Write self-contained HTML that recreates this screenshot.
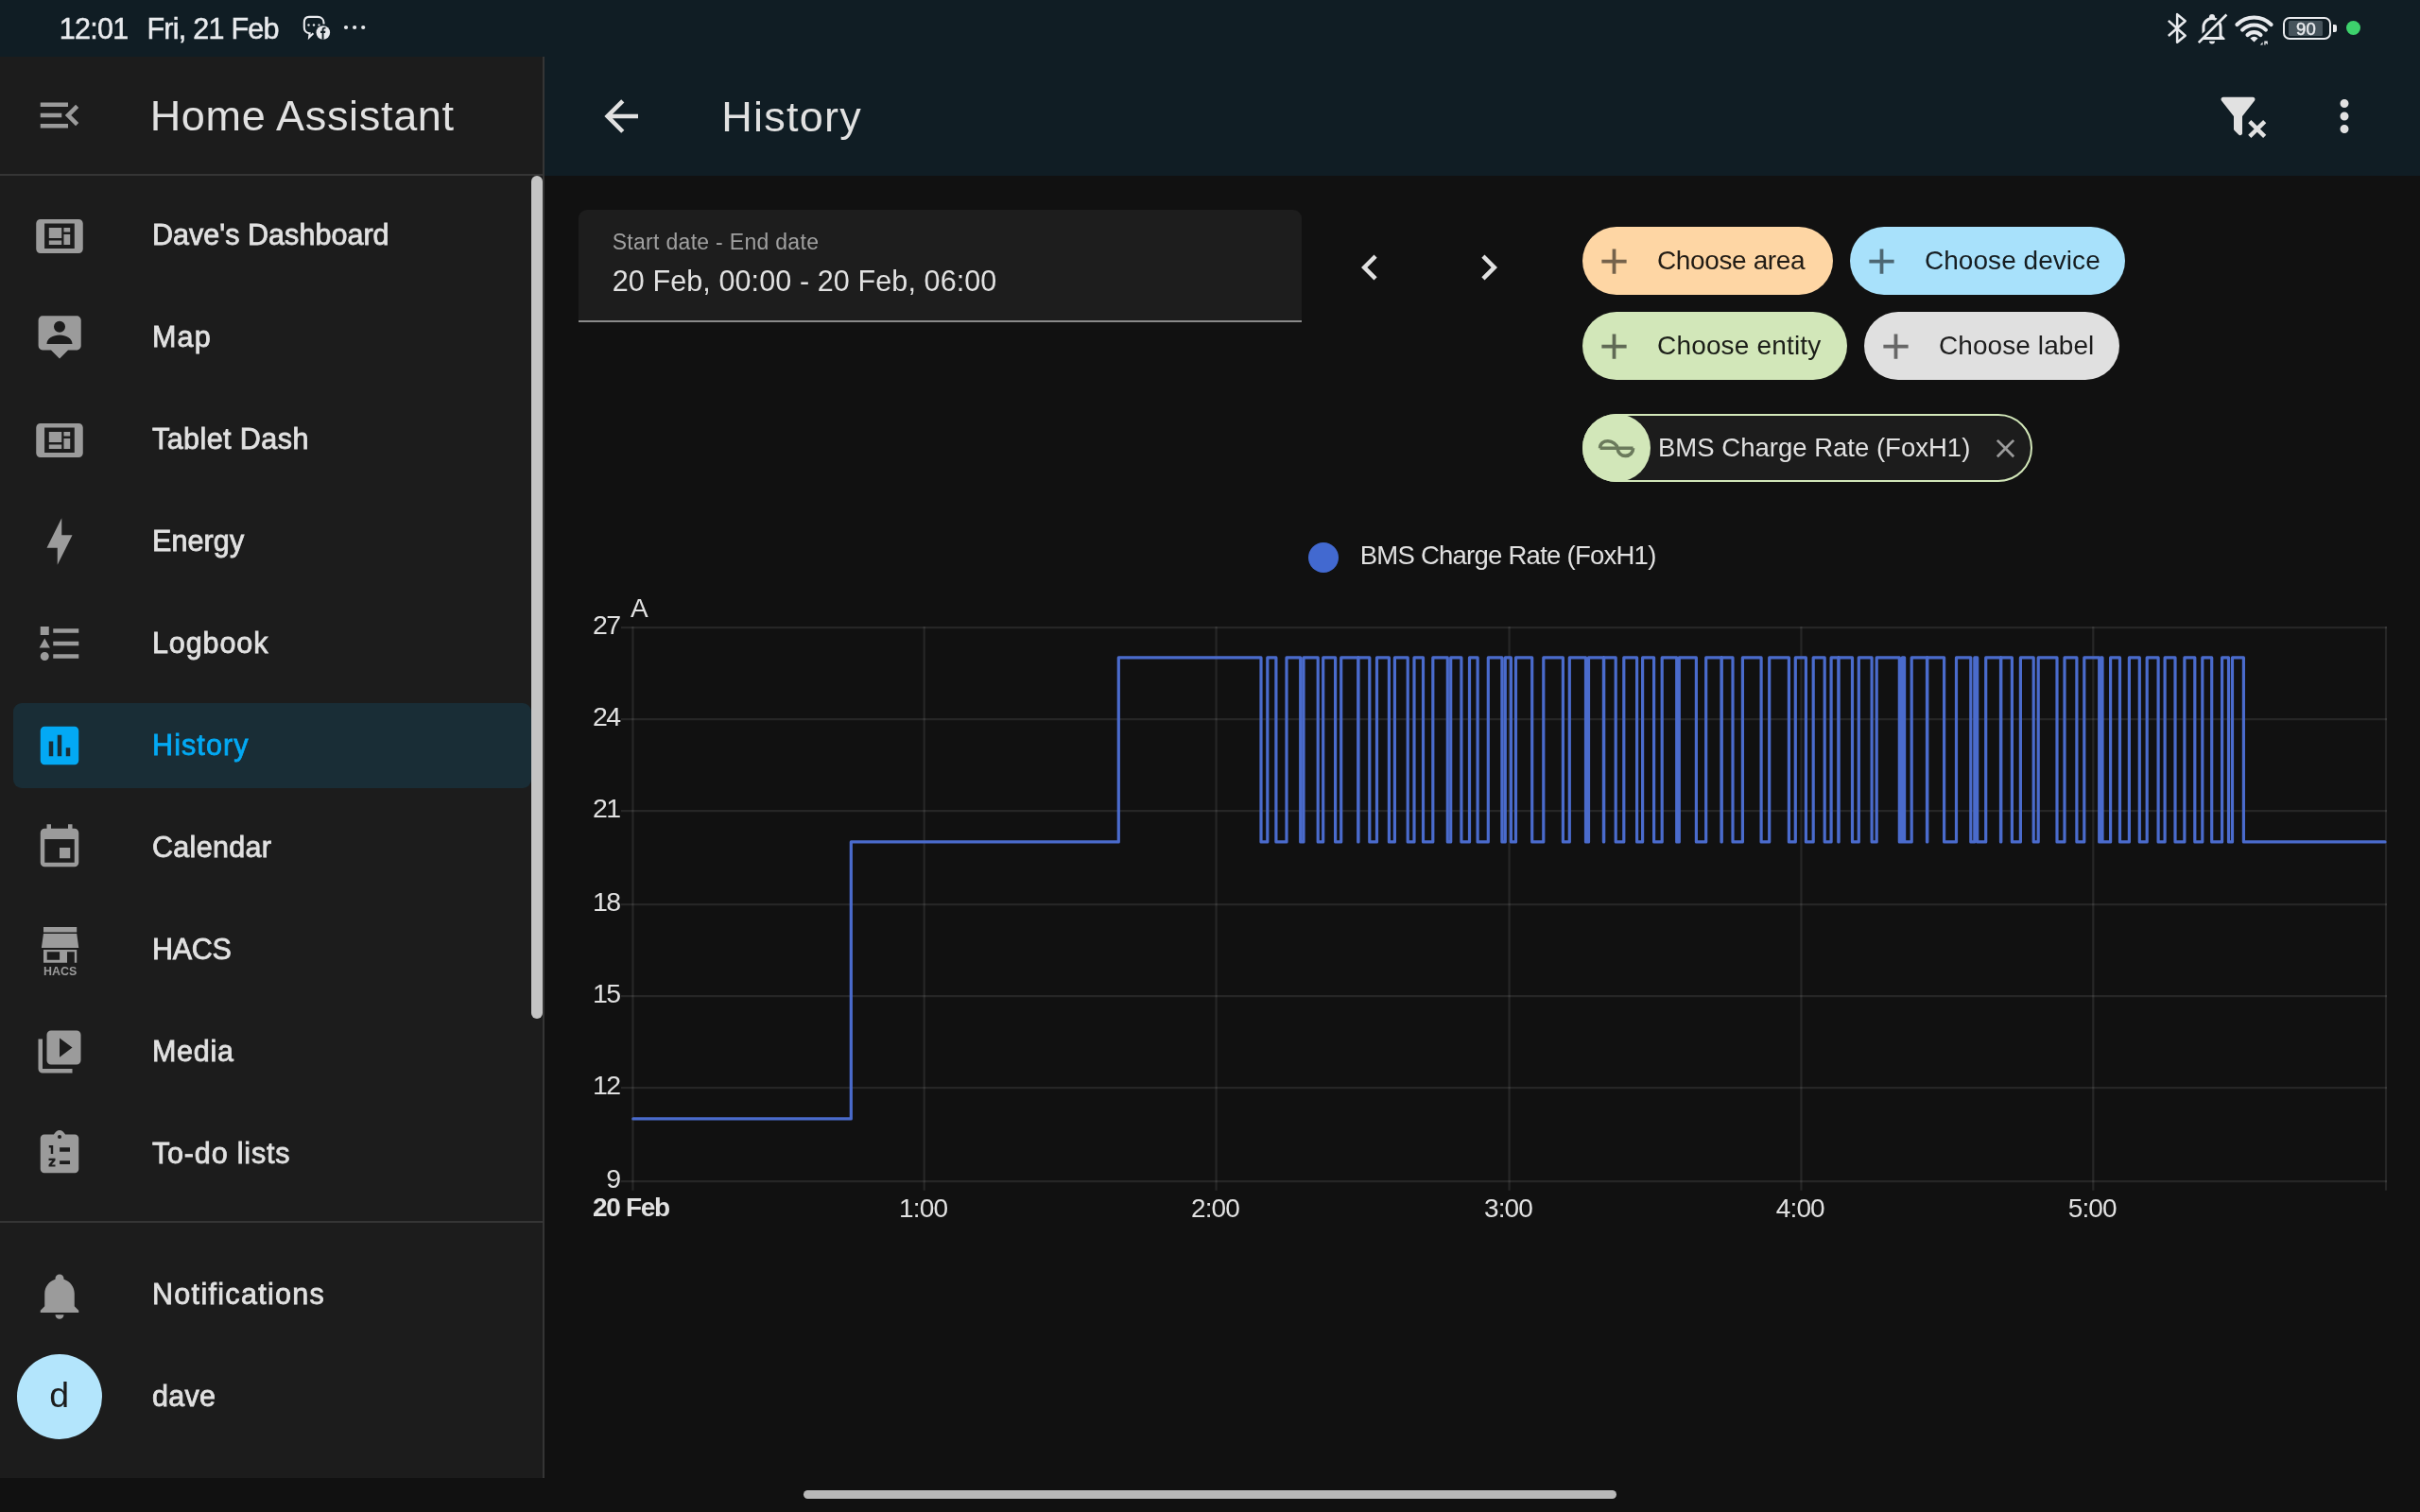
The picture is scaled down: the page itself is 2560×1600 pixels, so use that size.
<!DOCTYPE html><html><head><meta charset="utf-8"><style>
html,body{margin:0;padding:0;}
body{width:2560px;height:1600px;position:relative;overflow:hidden;will-change:transform;background:#111111;font-family:"Liberation Sans",sans-serif;}
.t{position:absolute;white-space:nowrap;}
.i{position:absolute;display:block;}
.r{position:absolute;}
</style></head><body>
<div class="r" style="left:0;top:0;width:2560px;height:60px;background:#101d24"></div>
<div class="r" style="left:576px;top:60px;width:1984px;height:126px;background:#101d24"></div>
<div class="r" style="left:0;top:60px;width:574px;height:1504px;background:#1c1c1c"></div>
<div class="r" style="left:574px;top:60px;width:2px;height:1504px;background:#353535"></div>
<div class="r" style="left:0;top:184px;width:574px;height:2px;background:#353535"></div>
<div class="r" style="left:0;top:1291.5px;width:574px;height:2px;background:#353535"></div>
<div class="r" style="left:562px;top:186px;width:12px;height:892px;border-radius:6px;background:#c4c4c4"></div>
<div class="t" style="left:62.8px;top:14.5px;font-size:30.5px;line-height:30.5px;color:#e8eaed;font-weight:400;letter-spacing:-0.7px;-webkit-text-stroke:0.5px currentColor;">12:01</div>
<div class="t" style="left:155.4px;top:14.5px;font-size:30.5px;line-height:30.5px;color:#e8eaed;font-weight:400;letter-spacing:-0.74px;-webkit-text-stroke:0.5px currentColor;">Fri, 21 Feb</div>
<svg class="i" style="left:310px;top:10px;width:90px;height:40px" viewBox="0 0 90 40"><path fill="none" stroke="#e8eaed" stroke-width="2.1" d="M32.5 15.5V14C32.5 10 29.5 7.9 26 7.9H17C13.5 7.9 11.8 10.5 11.8 14V19C11.8 22.5 14 25.2 17.5 25.2H17.6L17.1 29.4L21.4 25.3"/><circle cx="16.5" cy="16.5" r="1.2" fill="#e8eaed"/><circle cx="22" cy="16.5" r="1.2" fill="#e8eaed"/><path d="M26.5 16.5H28.5" stroke="#e8eaed" stroke-width="2"/><circle cx="31.8" cy="24.5" r="7.3" fill="#e8eaed"/><path fill="#111d23" d="M30.6 31.8V24.9H29V22.8H30.6V21.3C30.6 19.6 31.6 18.7 33.1 18.7C33.8 18.7 34.3 18.8 34.5 18.8V20.6H33.5C32.7 20.6 32.5 21 32.5 21.6V22.8H34.4L34.1 24.9H32.5V31.8Z"/><circle cx="56" cy="19" r="2.1" fill="#e8eaed"/><circle cx="65.1" cy="19" r="2.1" fill="#e8eaed"/><circle cx="74.2" cy="19" r="2.1" fill="#e8eaed"/></svg>
<svg class="i" style="left:2285px;top:10.7px;width:37.9px;height:37.9px" viewBox="0 0 24 24"><path fill="none" stroke="#e8eaed" stroke-width="1.6" stroke-linejoin="round" d="M5.6 6.9L16.9 16.9L11.5 21.4V2.6L16.9 7.1L5.6 17.1"/></svg>
<svg class="i" style="left:2322px;top:12px;width:36px;height:36px" viewBox="0 0 24 24"><g transform="translate(24,0) scale(-1,1)"><path fill="#e8eaed" d="M22.11 21.46L2.39 1.73L1.11 3L5.83 7.72C5.29 8.73 5 9.86 5 11V17L3 19V20H18.11L20.84 22.73L22.11 21.46M7 18V11C7 10.39 7.11 9.79 7.34 9.23L16.11 18H7M10 21H14A2 2 0 0 1 12 23A2 2 0 0 1 10 21M8.29 5.09C8.82 4.75 9.4 4.5 10 4.29V4A2 2 0 0 1 12 2A2 2 0 0 1 14 4V4.29C16.97 5.17 19 7.9 19 11V15.8L17 13.8V11A5 5 0 0 0 12 6C11.22 6 10.45 6.2 9.76 6.56L8.29 5.09Z"/></g></svg>
<svg class="i" style="left:2360px;top:10px;width:50px;height:40px" viewBox="0 0 50 40"><g fill="none" stroke="#e8eaed" stroke-width="4.2" stroke-linecap="round"><path d="M6.47 15.97A25.5 25.5 0 0 1 42.53 15.97"/><path d="M12.13 21.63A17.5 17.5 0 0 1 36.87 21.63"/><path d="M17.57 27.07A9.8 9.8 0 0 1 31.43 27.07"/></g><path fill="#e8eaed" d="M24.5 34.5L20.4 30.4A5.8 5.8 0 0 1 28.6 30.4Z"/><path fill="#e8eaed" d="M30.8 37.5L33.6 34.4V37.5Z M35.3 33.6V37.5H36.6V35.3L38.8 37.3V33.6Z"/></svg>
<div class="r" style="left:2415.3px;top:17.6px;width:50.6px;height:24.7px;box-sizing:border-box;border:2.6px solid #e8eaed;border-radius:7px"></div>
<div class="r" style="left:2421px;top:21.8px;width:36px;height:16.2px;background:#46535b;border-radius:1.5px"></div>
<div class="r" style="left:2467.6px;top:25.8px;width:4px;height:8.3px;background:#e8eaed;border-radius:0 2px 2px 0"></div>
<div class="t" style="left:2429px;top:21.5px;font-size:18.5px;line-height:18.5px;color:#e8eaed;font-weight:400;-webkit-text-stroke:0.5px currentColor;letter-spacing:0.3px;">90</div>
<div class="r" style="left:2481.8px;top:21.8px;width:15.2px;height:15.2px;border-radius:50%;background:#3dd16c"></div>
<svg class="i" style="left:36px;top:94.5px;width:54px;height:54px;" viewBox="0 0 24 24"><path fill="#9b9b9b" fill-rule="evenodd" d="M21,15.61L19.59,17L14.58,12L19.59,7L21,8.39L17.44,12L21,15.61M3,6H16V8H3V6M3,13V11H13V13H3M3,18V16H16V18H3Z"/></svg>
<div class="t" style="left:158.7px;top:100.1px;font-size:45px;line-height:45px;color:#e1e1e1;font-weight:400;letter-spacing:0.67px;">Home Assistant</div>
<svg class="i" style="left:36px;top:222px;width:54px;height:54px;" viewBox="0 0 24 24"><path fill="#9b9b9b" fill-rule="evenodd" d="M3 4.4H21C22.1 4.4 23 5.3 23 6.4V18.44C23 19.54 22.1 20.44 21 20.44H3C1.9 20.44 1 19.54 1 18.44V6.4C1 5.3 1.9 4.4 3 4.4Z M4.93 6.44V18.27H19.02V6.44Z M7.02 8.4H12.98V13.33H7.02Z M13.98 8.4H16.98V10.49H13.98Z M7.02 14.4H12.98V16.44H7.02Z M13.98 11.51H16.98V16.44H13.98Z"/></svg>
<div class="t" style="left:161px;top:233.2px;font-size:30.5px;line-height:30.5px;color:#e1e1e1;font-weight:400;-webkit-text-stroke:0.8px currentColor;letter-spacing:0.04px;">Dave's Dashboard</div>
<svg class="i" style="left:36px;top:330px;width:54px;height:54px;" viewBox="0 0 24 24"><path fill="#9b9b9b" fill-rule="evenodd" d="M4 1.9H20C21.15 1.9 22.1 2.85 22.1 4V15.85C22.1 17 21.15 17.95 20 17.95H16L12 21.96L8 17.95H4C2.85 17.95 2.04 17 2.04 15.85V4C2.04 2.85 2.85 1.9 4 1.9Z M6 15.07C6 12.5 9 10.93 12 10.93C15 10.93 18 12.5 18 15.07Z M12 4.31A2.67 2.67 0 1 0 12 9.65A2.67 2.67 0 1 0 12 4.31Z"/></svg>
<div class="t" style="left:161px;top:341.2px;font-size:30.5px;line-height:30.5px;color:#e1e1e1;font-weight:400;-webkit-text-stroke:0.8px currentColor;letter-spacing:1.2px;">Map</div>
<svg class="i" style="left:36px;top:438px;width:54px;height:54px;" viewBox="0 0 24 24"><path fill="#9b9b9b" fill-rule="evenodd" d="M3 4.4H21C22.1 4.4 23 5.3 23 6.4V18.44C23 19.54 22.1 20.44 21 20.44H3C1.9 20.44 1 19.54 1 18.44V6.4C1 5.3 1.9 4.4 3 4.4Z M4.93 6.44V18.27H19.02V6.44Z M7.02 8.4H12.98V13.33H7.02Z M13.98 8.4H16.98V10.49H13.98Z M7.02 14.4H12.98V16.44H7.02Z M13.98 11.51H16.98V16.44H13.98Z"/></svg>
<div class="t" style="left:161px;top:449.2px;font-size:30.5px;line-height:30.5px;color:#e1e1e1;font-weight:400;-webkit-text-stroke:0.8px currentColor;letter-spacing:0.43px;">Tablet Dash</div>
<svg class="i" style="left:36px;top:546px;width:54px;height:54px;" viewBox="0 0 24 24"><path fill="#9b9b9b" fill-rule="evenodd" d="M11 15H6L13 1V9H18L11 23V15Z"/></svg>
<div class="t" style="left:161px;top:557.2px;font-size:30.5px;line-height:30.5px;color:#e1e1e1;font-weight:400;-webkit-text-stroke:0.8px currentColor;letter-spacing:0.1px;">Energy</div>
<svg class="i" style="left:36px;top:654px;width:54px;height:54px;" viewBox="0 0 24 24"><path fill="#9b9b9b" fill-rule="evenodd" d="M5,9.5L7.5,14H2.5L5,9.5M3,4H7V8H3V4M5,20A2,2 0 0,0 7,18A2,2 0 0,0 5,16A2,2 0 0,0 3,18A2,2 0 0,0 5,20M9,5V7H21V5H9M9,19H21V17H9V19M9,13H21V11H9V13Z"/></svg>
<div class="t" style="left:161px;top:665.2px;font-size:30.5px;line-height:30.5px;color:#e1e1e1;font-weight:400;-webkit-text-stroke:0.8px currentColor;letter-spacing:0.9px;">Logbook</div>
<div class="r" style="left:14px;top:744px;width:548px;height:90px;border-radius:9px;background:#192d36"></div>
<svg class="i" style="left:36px;top:762px;width:54px;height:54px;" viewBox="0 0 24 24"><path fill="#03a9f4" fill-rule="evenodd" d="M19 3H5C3.9 3 3 3.9 3 5V19C3 20.1 3.9 21 5 21H19C20.1 21 21 20.1 21 19V5C21 3.9 20.1 3 19 3M9 17H7V10H9V17M13 17H11V7H13V17M17 17H15V13H17V17Z"/></svg>
<div class="t" style="left:161px;top:773.2px;font-size:30.5px;line-height:30.5px;color:#03a9f4;font-weight:400;-webkit-text-stroke:0.8px currentColor;letter-spacing:1.1px;">History</div>
<svg class="i" style="left:36px;top:870px;width:54px;height:54px;" viewBox="0 0 24 24"><path fill="#9b9b9b" fill-rule="evenodd" d="M19,19H5V8H19M16,1V3H8V1H6V3H5C3.89,3 3,3.89 3,5V19A2,2 0 0,0 5,21H19A2,2 0 0,0 21,19V5C21,3.89 20.1,3 19,3H18V1M17,12H12V17H17V12Z"/></svg>
<div class="t" style="left:161px;top:881.2px;font-size:30.5px;line-height:30.5px;color:#e1e1e1;font-weight:400;-webkit-text-stroke:0.8px currentColor;letter-spacing:0.29px;">Calendar</div>
<svg class="i" style="left:36px;top:978px;width:54px;height:54px" viewBox="0 0 24 24"><path fill="#9b9b9b" fill-rule="evenodd" d="M4.44 1.38H20.1V3.73H4.44Z M4.44 4.44H20.1L21 11.07H3.5Z M4.44 12H20.1V18.13H19.02V13H15.56V18.13H4.44Z M6.1 13.02V16.8H12.04V13.02Z"/><text x="12.27" y="23.9" font-family="Liberation Sans" font-weight="700" font-size="5.9" text-anchor="middle" textLength="15.66" lengthAdjust="spacingAndGlyphs" fill="#9b9b9b">HACS</text></svg>
<div class="t" style="left:161px;top:989.2px;font-size:30.5px;line-height:30.5px;color:#e1e1e1;font-weight:400;-webkit-text-stroke:0.8px currentColor;letter-spacing:-0.3px;">HACS</div>
<svg class="i" style="left:36px;top:1086px;width:54px;height:54px;" viewBox="0 0 24 24"><path fill="#9b9b9b" fill-rule="evenodd" d="M4,6H2V20A2,2 0 0,0 4,22H18V20H4V6M20,2H8A2,2 0 0,0 6,4V16A2,2 0 0,0 8,18H20A2,2 0 0,0 22,16V4A2,2 0 0,0 20,2M12,14.5V5.5L18,10L12,14.5Z"/></svg>
<div class="t" style="left:161px;top:1097.2px;font-size:30.5px;line-height:30.5px;color:#e1e1e1;font-weight:400;-webkit-text-stroke:0.8px currentColor;letter-spacing:0.7px;">Media</div>
<svg class="i" style="left:36px;top:1194px;width:54px;height:54px" viewBox="0 0 24 24"><path fill="#9b9b9b" fill-rule="evenodd" d="M4.8 2.9H9.3C10 1.6 10.9 0.84 12 0.84C13.1 0.84 14 1.6 14.7 2.9H19.2C20.2 2.9 21 3.7 21 4.7V19.2C21 20.2 20.2 21 19.2 21H4.8C3.8 21 3 20.2 3 19.2V4.7C3 3.7 3.8 2.9 4.8 2.9Z M12 3.1A0.9 0.9 0 1 0 12 4.9A0.9 0.9 0 1 0 12 3.1Z M12.04 8.98H16.9V11H12.04Z M12.04 15.24H16.9V16.9H12.04Z"/><path fill="#1c1c1c" d="M7.0 8H8.98V11.96H7.9V9.1H7.0Z M6.9 14.09H10V15.1L8.3 17.1H10V18H6.9V17.1L8.6 15.1H6.9Z"/></svg>
<div class="t" style="left:161px;top:1205.2px;font-size:30.5px;line-height:30.5px;color:#e1e1e1;font-weight:400;-webkit-text-stroke:0.8px currentColor;letter-spacing:0.83px;">To-do lists</div>
<svg class="i" style="left:36px;top:1343.8px;width:54px;height:54px;" viewBox="0 0 24 24"><path fill="#9b9b9b" fill-rule="evenodd" d="M21,19V20H3V19L5,17V11C5,7.9 7.03,5.17 10,4.29C10,4.19 10,4.1 10,4A2,2 0 0,1 12,2A2,2 0 0,1 14,4C14,4.1 14,4.19 14,4.29C16.97,5.17 19,7.9 19,11V17L21,19M14,21A2,2 0 0,1 12,23A2,2 0 0,1 10,21"/></svg>
<div class="t" style="left:161px;top:1354.2px;font-size:30.5px;line-height:30.5px;color:#e1e1e1;font-weight:400;-webkit-text-stroke:0.8px currentColor;letter-spacing:1.31px;">Notifications</div>
<div class="r" style="left:18px;top:1433px;width:90px;height:90px;border-radius:50%;background:#b3e5fc"></div>
<div class="t" style="left:52.3px;top:1458px;font-size:37.5px;line-height:37.5px;color:#1c1c1c;font-weight:400;">d</div>
<div class="t" style="left:161px;top:1462.2px;font-size:30.5px;line-height:30.5px;color:#e1e1e1;font-weight:400;-webkit-text-stroke:0.8px currentColor;letter-spacing:0.27px;">dave</div>
<svg class="i" style="left:630px;top:95.8px;width:54px;height:54px;" viewBox="0 0 24 24"><path fill="#e1e1e1" fill-rule="evenodd" d="M20,11V13H8L13.5,18.5L12.08,19.92L4.16,12L12.08,4.08L13.5,5.5L8,11H20Z"/></svg>
<div class="t" style="left:763.3px;top:101.3px;font-size:45px;line-height:45px;color:#e1e1e1;font-weight:400;letter-spacing:1.25px;">History</div>
<svg class="i" style="left:2345px;top:95.8px;width:54px;height:54px;" viewBox="0 0 24 24"><path fill="#e1e1e1" fill-rule="evenodd" d="M14.76,20.83L17.6,18L14.76,15.17L16.17,13.76L19,16.57L21.83,13.76L23.24,15.17L20.43,18L23.24,20.83L21.83,22.24L19,19.41L16.17,22.24L14.76,20.83M12,12V19.88C12.04,20.18 11.94,20.5 11.71,20.71C11.32,21.1 10.69,21.1 10.3,20.71L8.29,18.7C8.06,18.47 7.96,18.16 8,17.87V12H7.97L2.21,4.62C1.87,4.19 1.95,3.56 2.38,3.22C2.57,3.08 2.78,3 3,3V3H17V3C17.22,3 17.43,3.08 17.62,3.22C18.05,3.56 18.13,4.19 17.79,4.62L12.03,12H12Z"/></svg>
<svg class="i" style="left:2453px;top:96px;width:54px;height:54px;" viewBox="0 0 24 24"><path fill="#e1e1e1" fill-rule="evenodd" d="M12,16A2,2 0 0,1 14,18A2,2 0 0,1 12,20A2,2 0 0,1 10,18A2,2 0 0,1 12,16M12,10A2,2 0 0,1 14,12A2,2 0 0,1 12,14A2,2 0 0,1 10,12A2,2 0 0,1 12,10M12,4A2,2 0 0,1 14,6A2,2 0 0,1 12,8A2,2 0 0,1 10,6A2,2 0 0,1 12,4Z"/></svg>
<div class="r" style="left:612px;top:222px;width:765px;height:119px;border-radius:9px 9px 0 0;background:#1d1d1d"></div>
<div class="r" style="left:612px;top:338.5px;width:765px;height:2.5px;background:#8a8a8a"></div>
<div class="t" style="left:647.7px;top:244.5px;font-size:23px;line-height:23px;color:#a0a0a0;font-weight:400;letter-spacing:0.3px;">Start date - End date</div>
<div class="t" style="left:647.7px;top:282.2px;font-size:30.5px;line-height:30.5px;color:#e1e1e1;font-weight:400;letter-spacing:0.11px;">20 Feb, 00:00 - 20 Feb, 06:00</div>
<svg class="i" style="left:1421.6px;top:255.5px;width:54px;height:54px;" viewBox="0 0 24 24"><path fill="#e1e1e1" fill-rule="evenodd" d="M15.41,16.58L10.83,12L15.41,7.41L14,6L8,12L14,18L15.41,16.58Z"/></svg>
<svg class="i" style="left:1547.7px;top:255.5px;width:54px;height:54px;" viewBox="0 0 24 24"><path fill="#e1e1e1" fill-rule="evenodd" d="M8.59,16.58L13.17,12L8.59,7.41L10,6L16,12L10,18L8.59,16.58Z"/></svg>
<div class="r" style="left:1674px;top:240px;width:265px;height:72px;border-radius:36px;background:#fed6a4"></div>
<svg class="i" style="left:1684.6px;top:253.5px;width:45px;height:45px;" viewBox="0 0 24 24"><path fill="rgba(0,0,0,0.54)" fill-rule="evenodd" d="M19,13H13V19H11V13H5V11H11V5H13V11H19V13Z"/></svg>
<div class="t" style="left:1753px;top:261.6px;font-size:28px;line-height:28px;color:rgba(0,0,0,0.87);font-weight:400;letter-spacing:-0.38px;">Choose area</div>
<div class="r" style="left:1957px;top:240px;width:291px;height:72px;border-radius:36px;background:#a8e1fb"></div>
<svg class="i" style="left:1967.6px;top:253.5px;width:45px;height:45px;" viewBox="0 0 24 24"><path fill="rgba(0,0,0,0.54)" fill-rule="evenodd" d="M19,13H13V19H11V13H5V11H11V5H13V11H19V13Z"/></svg>
<div class="t" style="left:2036px;top:261.6px;font-size:28px;line-height:28px;color:rgba(0,0,0,0.87);font-weight:400;letter-spacing:0.04px;">Choose device</div>
<div class="r" style="left:1674px;top:330px;width:280px;height:72px;border-radius:36px;background:#d2e7b9"></div>
<svg class="i" style="left:1684.6px;top:343.5px;width:45px;height:45px;" viewBox="0 0 24 24"><path fill="rgba(0,0,0,0.54)" fill-rule="evenodd" d="M19,13H13V19H11V13H5V11H11V5H13V11H19V13Z"/></svg>
<div class="t" style="left:1753px;top:351.6px;font-size:28px;line-height:28px;color:rgba(0,0,0,0.87);font-weight:400;letter-spacing:0.17px;">Choose entity</div>
<div class="r" style="left:1972px;top:330px;width:270px;height:72px;border-radius:36px;background:#e0e0e0"></div>
<svg class="i" style="left:1982.6px;top:343.5px;width:45px;height:45px;" viewBox="0 0 24 24"><path fill="rgba(0,0,0,0.54)" fill-rule="evenodd" d="M19,13H13V19H11V13H5V11H11V5H13V11H19V13Z"/></svg>
<div class="t" style="left:2051px;top:351.6px;font-size:28px;line-height:28px;color:rgba(0,0,0,0.87);font-weight:400;letter-spacing:0.08px;">Choose label</div>
<div class="r" style="left:1674px;top:438px;width:476px;height:72px;border-radius:36px;background:#1c1c1c;box-sizing:border-box;border:2px solid #d2e7b9"></div>
<div class="r" style="left:1674px;top:438px;width:72px;height:72px;border-radius:50%;background:#d2e7b9"></div>
<svg class="i" style="left:1674px;top:438px;width:72px;height:72px" viewBox="0 0 72 72"><path fill="none" stroke="#6b7a5c" stroke-width="3.6" d="M18.6 36.2 H53.6 M18.6 36.2 C18.6 31.5 22.3 28.8 26.9 28.8 C31.8 28.8 36.6 32.5 37 36.2 C37.6 41.5 41.5 44.4 45.5 44.4 C50 44.4 53.6 41 53.6 36.2"/></svg>
<div class="t" style="left:1754px;top:459.7px;font-size:27.5px;line-height:27.5px;color:#e1e1e1;font-weight:400;letter-spacing:0.01px;">BMS Charge Rate (FoxH1)</div>
<svg class="i" style="left:2104.5px;top:457.5px;width:33px;height:33px;" viewBox="0 0 24 24"><path fill="#9b9b9b" fill-rule="evenodd" d="M19,6.41L17.59,5L12,10.59L6.41,5L5,6.41L10.59,12L5,17.59L6.41,19L12,13.41L17.59,19L19,17.59L13.41,12L19,6.41Z"/></svg>
<div class="r" style="left:1384px;top:573.7px;width:32px;height:32px;border-radius:50%;background:#4269d0"></div>
<div class="t" style="left:1438.7px;top:574.4px;font-size:27.5px;line-height:27.5px;color:#e1e1e1;font-weight:400;letter-spacing:-0.75px;">BMS Charge Rate (FoxH1)</div>
<svg class="i" style="left:0;top:0;width:2560px;height:1600px" viewBox="0 0 2560 1600"><line x1="657" y1="664.1" x2="2525" y2="664.1" stroke="rgba(255,255,255,0.09)" stroke-width="2.25"/><line x1="657" y1="761" x2="2525" y2="761" stroke="rgba(255,255,255,0.09)" stroke-width="2.25"/><line x1="657" y1="858" x2="2525" y2="858" stroke="rgba(255,255,255,0.09)" stroke-width="2.25"/><line x1="657" y1="957.1" x2="2525" y2="957.1" stroke="rgba(255,255,255,0.09)" stroke-width="2.25"/><line x1="657" y1="1054" x2="2525" y2="1054" stroke="rgba(255,255,255,0.09)" stroke-width="2.25"/><line x1="657" y1="1151" x2="2525" y2="1151" stroke="rgba(255,255,255,0.09)" stroke-width="2.25"/><line x1="657" y1="1250" x2="2525" y2="1250" stroke="rgba(255,255,255,0.09)" stroke-width="2.25"/><line x1="669.4" y1="663" x2="669.4" y2="1259.7" stroke="rgba(255,255,255,0.09)" stroke-width="2.25"/><line x1="977.7" y1="663" x2="977.7" y2="1259.7" stroke="rgba(255,255,255,0.09)" stroke-width="2.25"/><line x1="1286.6" y1="663" x2="1286.6" y2="1259.7" stroke="rgba(255,255,255,0.09)" stroke-width="2.25"/><line x1="1596.6" y1="663" x2="1596.6" y2="1259.7" stroke="rgba(255,255,255,0.09)" stroke-width="2.25"/><line x1="1905.4" y1="663" x2="1905.4" y2="1259.7" stroke="rgba(255,255,255,0.09)" stroke-width="2.25"/><line x1="2214.3" y1="663" x2="2214.3" y2="1259.7" stroke="rgba(255,255,255,0.09)" stroke-width="2.25"/><line x1="2524" y1="663" x2="2524" y2="1259.7" stroke="rgba(255,255,255,0.09)" stroke-width="2.25"/><path d="M669.8 1183.9 L900.3 1183.9 L900.3 890.9 L1183.3 890.9 L1183.3 695.9 L1334 695.9 L1334 890.9 L1340.8 890.9 L1340.8 695.9 L1349.9 695.9 L1349.9 890.9 L1361 890.9 L1361 695.9 L1375.7 695.9 L1375.7 890.9 L1379 890.9 L1379 695.9 L1394.2 695.9 L1394.2 890.9 L1399.7 890.9 L1399.7 695.9 L1412.6 695.9 L1412.6 890.9 L1418.7 890.9 L1418.7 695.9 L1436.7 695.9 L1436.7 890.9 L1437 890.9 L1437 695.9 L1448.8 695.9 L1448.8 890.9 L1456.5 890.9 L1456.5 695.9 L1469.4 695.9 L1469.4 890.9 L1475.4 890.9 L1475.4 695.9 L1489.2 695.9 L1489.2 890.9 L1496 890.9 L1496 695.9 L1505.5 695.9 L1505.5 890.9 L1515.8 890.9 L1515.8 695.9 L1531.3 695.9 L1531.3 890.9 L1534.7 890.9 L1534.7 695.9 L1545.9 695.9 L1545.9 890.9 L1554.5 890.9 L1554.5 695.9 L1563.1 695.9 L1563.1 890.9 L1574.3 890.9 L1574.3 695.9 L1588.9 695.9 L1588.9 890.9 L1592.3 890.9 L1592.3 695.9 L1598.4 695.9 L1598.4 890.9 L1603.5 890.9 L1603.5 695.9 L1620.7 695.9 L1620.7 890.9 L1632.8 890.9 L1632.8 695.9 L1653.4 695.9 L1653.4 890.9 L1660.3 890.9 L1660.3 695.9 L1677.5 695.9 L1677.5 890.9 L1680.5 890.9 L1680.5 695.9 L1696.4 695.9 L1696.4 890.9 L1696.7 890.9 L1696.7 695.9 L1709.2 695.9 L1709.2 890.9 L1717.8 890.9 L1717.8 695.9 L1731.6 695.9 L1731.6 890.9 L1737.6 890.9 L1737.6 695.9 L1749.6 695.9 L1749.6 890.9 L1758.2 890.9 L1758.2 695.9 L1773.7 695.9 L1773.7 890.9 L1776.3 890.9 L1776.3 695.9 L1794.4 695.9 L1794.4 890.9 L1804.7 890.9 L1804.7 695.9 L1821 695.9 L1821 890.9 L1821.3 890.9 L1821.3 695.9 L1833 695.9 L1833 890.9 L1843.4 890.9 L1843.4 695.9 L1863.1 695.9 L1863.1 890.9 L1871.7 890.9 L1871.7 695.9 L1892.4 695.9 L1892.4 890.9 L1899.3 890.9 L1899.3 695.9 L1910.4 695.9 L1910.4 890.9 L1918.2 890.9 L1918.2 695.9 L1930.2 695.9 L1930.2 890.9 L1937.1 890.9 L1937.1 695.9 L1944.8 695.9 L1944.8 890.9 L1945.1 890.9 L1945.1 695.9 L1959.5 695.9 L1959.5 890.9 L1966.3 890.9 L1966.3 695.9 L1980.1 695.9 L1980.1 890.9 L1985.2 890.9 L1985.2 695.9 L2009.3 695.9 L2009.3 890.9 L2012.3 890.9 L2012.3 695.9 L2014.6 695.9 L2014.6 890.9 L2022.2 890.9 L2022.2 695.9 L2038.5 695.9 L2038.5 890.9 L2038.8 890.9 L2038.8 695.9 L2056.6 695.9 L2056.6 890.9 L2069.5 890.9 L2069.5 695.9 L2084.8 695.9 L2084.8 890.9 L2088.8 890.9 L2088.8 695.9 L2091.7 695.9 L2091.7 890.9 L2100.7 890.9 L2100.7 695.9 L2116.5 695.9 L2116.5 890.9 L2116.8 890.9 L2116.8 695.9 L2128.4 695.9 L2128.4 890.9 L2137.4 890.9 L2137.4 695.9 L2151.2 695.9 L2151.2 890.9 L2156.2 890.9 L2156.2 695.9 L2176 695.9 L2176 890.9 L2184 890.9 L2184 695.9 L2196.9 695.9 L2196.9 890.9 L2204.8 890.9 L2204.8 695.9 L2220.7 695.9 L2220.7 890.9 L2222.5 890.9 L2222.5 695.9 L2224 695.9 L2224 890.9 L2232.6 890.9 L2232.6 695.9 L2242.5 695.9 L2242.5 890.9 L2252.4 890.9 L2252.4 695.9 L2263.3 695.9 L2263.3 890.9 L2271.2 890.9 L2271.2 695.9 L2283.1 695.9 L2283.1 890.9 L2290.1 890.9 L2290.1 695.9 L2301 695.9 L2301 890.9 L2310.9 890.9 L2310.9 695.9 L2321.8 695.9 L2321.8 890.9 L2329.8 890.9 L2329.8 695.9 L2339.7 695.9 L2339.7 890.9 L2350.6 890.9 L2350.6 695.9 L2357.5 695.9 L2357.5 890.9 L2361.5 890.9 L2361.5 695.9 L2373.4 695.9 L2373.4 890.9 L2523 890.9" fill="none" stroke="#4a6bcc" stroke-width="3.2" stroke-linejoin="round" stroke-linecap="round"/></svg>
<div class="t" style="right:1904.3px;top:647px;font-size:28.5px;line-height:28.5px;color:#e1e1e1;letter-spacing:-1.5px">27</div>
<div class="t" style="right:1904.3px;top:743.9px;font-size:28.5px;line-height:28.5px;color:#e1e1e1;letter-spacing:-1.5px">24</div>
<div class="t" style="right:1904.3px;top:840.9px;font-size:28.5px;line-height:28.5px;color:#e1e1e1;letter-spacing:-1.5px">21</div>
<div class="t" style="right:1904.3px;top:940px;font-size:28.5px;line-height:28.5px;color:#e1e1e1;letter-spacing:-1.5px">18</div>
<div class="t" style="right:1904.3px;top:1036.9px;font-size:28.5px;line-height:28.5px;color:#e1e1e1;letter-spacing:-1.5px">15</div>
<div class="t" style="right:1904.3px;top:1133.9px;font-size:28.5px;line-height:28.5px;color:#e1e1e1;letter-spacing:-1.5px">12</div>
<div class="t" style="right:1904.3px;top:1232.9px;font-size:28.5px;line-height:28.5px;color:#e1e1e1;letter-spacing:-1.5px">9</div>
<div class="t" style="left:667px;top:629.5px;font-size:28px;line-height:28px;color:#e1e1e1;font-weight:400;">A</div>
<div class="t" style="left:627px;top:1263.6px;font-size:28px;line-height:28px;color:#e1e1e1;font-weight:700;letter-spacing:-1.34px;">20 Feb</div>
<div class="t" style="left:916.2px;width:120px;text-align:center;top:1264.6px;font-size:28px;line-height:28px;color:#e1e1e1;letter-spacing:-0.87px;text-indent:0.87px">1:00</div>
<div class="t" style="left:1225.1px;width:120px;text-align:center;top:1264.6px;font-size:28px;line-height:28px;color:#e1e1e1;letter-spacing:-0.87px;text-indent:0.87px">2:00</div>
<div class="t" style="left:1535.1px;width:120px;text-align:center;top:1264.6px;font-size:28px;line-height:28px;color:#e1e1e1;letter-spacing:-0.87px;text-indent:0.87px">3:00</div>
<div class="t" style="left:1843.9px;width:120px;text-align:center;top:1264.6px;font-size:28px;line-height:28px;color:#e1e1e1;letter-spacing:-0.87px;text-indent:0.87px">4:00</div>
<div class="t" style="left:2152.8px;width:120px;text-align:center;top:1264.6px;font-size:28px;line-height:28px;color:#e1e1e1;letter-spacing:-0.87px;text-indent:0.87px">5:00</div>
<div class="r" style="left:850px;top:1577px;width:860px;height:9px;border-radius:4.5px;background:#b9b9b9"></div>
</body></html>
